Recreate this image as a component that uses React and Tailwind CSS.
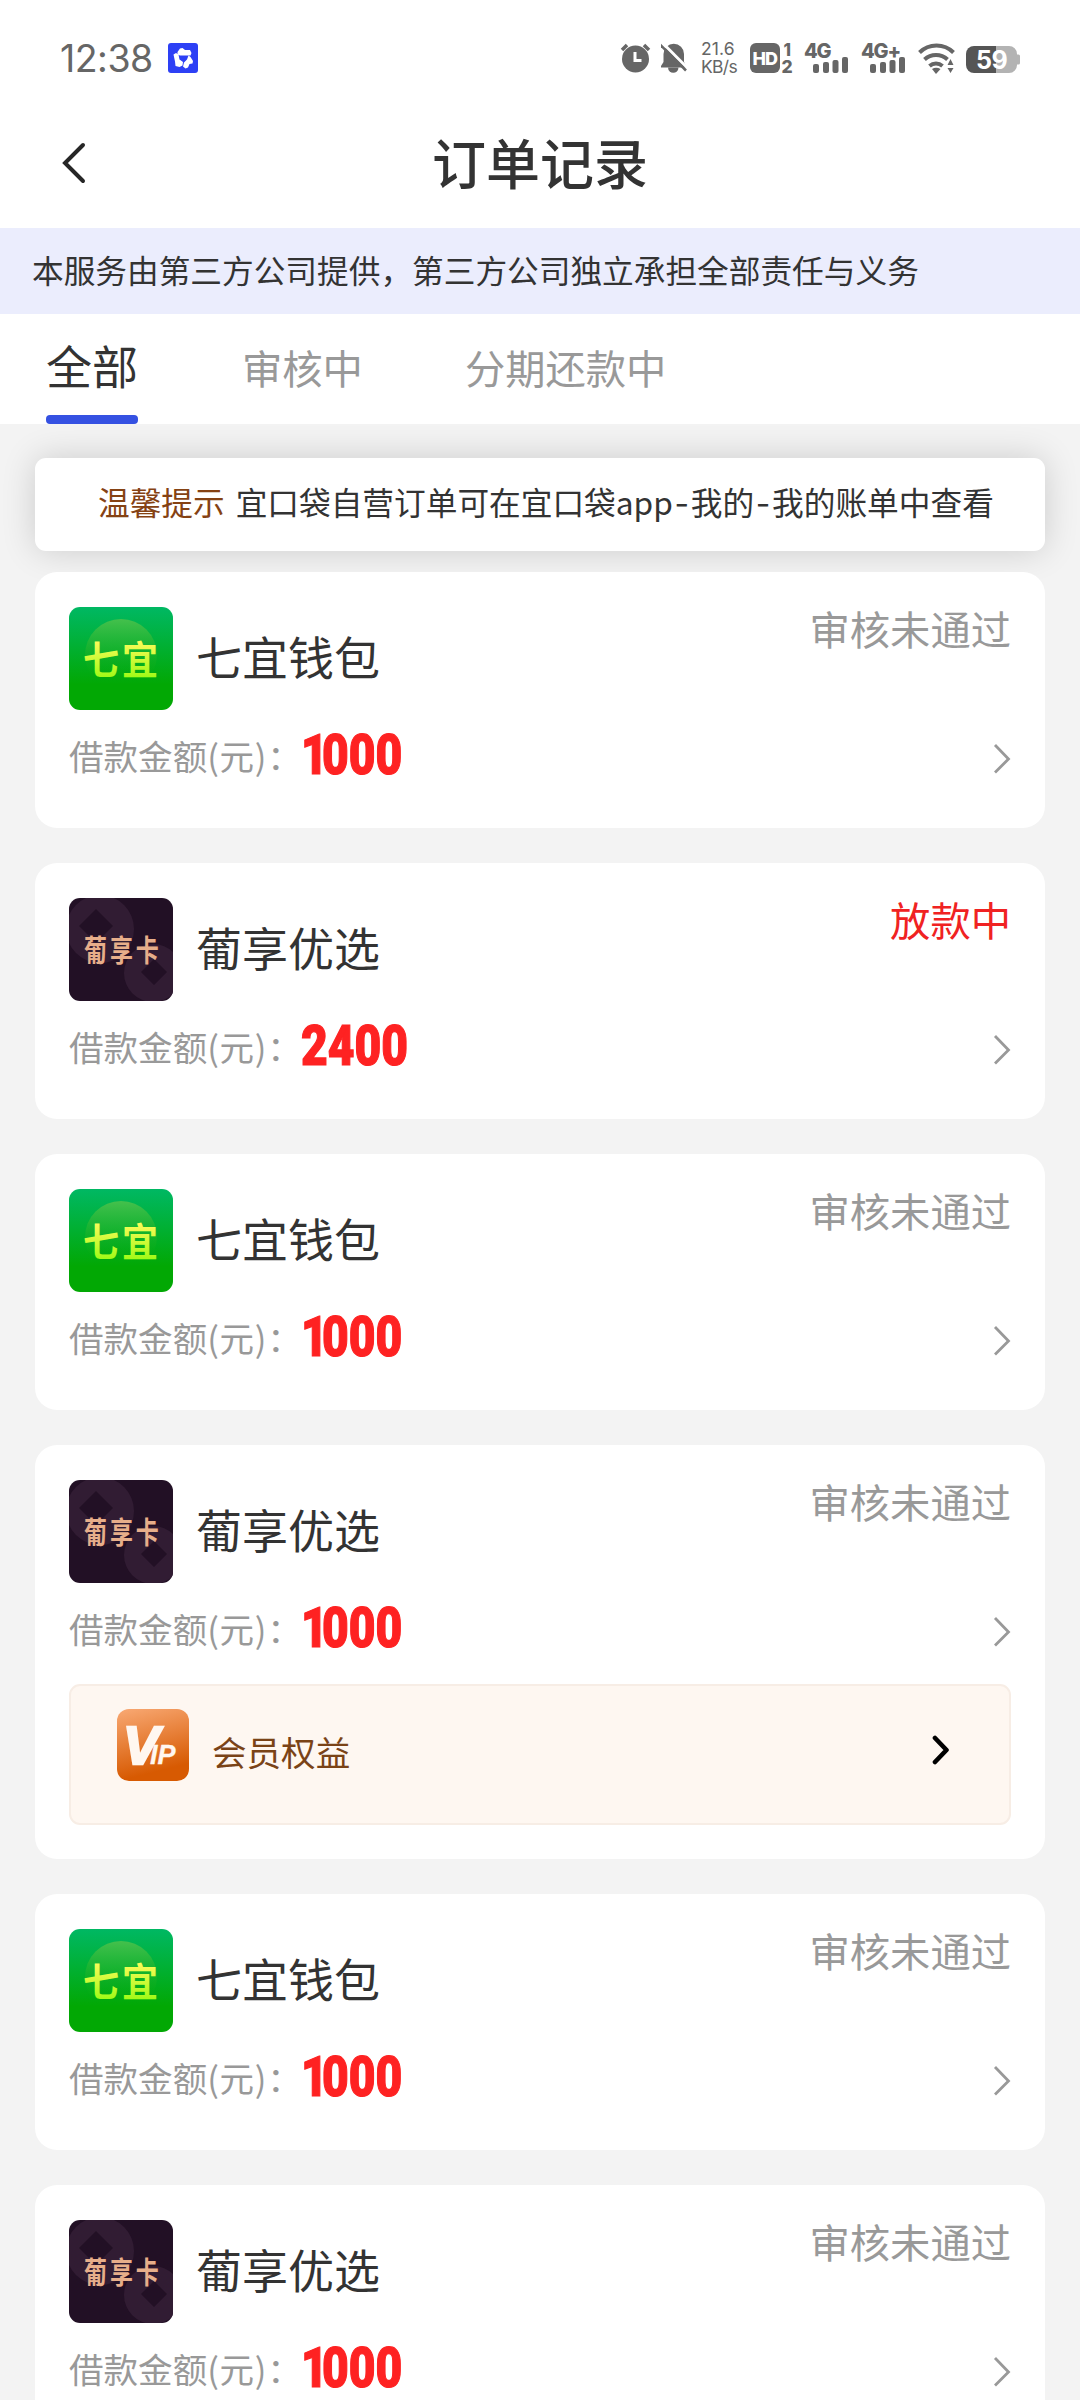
import React from 'react';

const orders = [
    { id: 1, brand: 'qiyi', name: '七宜钱包', amount: 1000, status: 'rejected' },
    { id: 2, brand: 'puxiang', name: '葡享优选', amount: 2400, status: 'lending' },
    { id: 3, brand: 'qiyi', name: '七宜钱包', amount: 1000, status: 'rejected' },
    { id: 4, brand: 'puxiang', name: '葡享优选', amount: 1000, status: 'rejected', vip: true },
    { id: 5, brand: 'qiyi', name: '七宜钱包', amount: 1000, status: 'rejected' },
    { id: 6, brand: 'puxiang', name: '葡享优选', amount: 1000, status: 'rejected' },
];

const statusMap = {
    rejected: { label: '审核未通过', className: 'text-[#999]' },
    lending: { label: '放款中', className: 'text-[#f02222]' },
};

const Signal = ({ label }) => (
    <svg className="overflow-visible" width="46" height="32" viewBox="0 0 46 32" fill="#666">
        <text x="0" y="15.500" fontSize="20" fontWeight="800" fontFamily="Inter, sans-serif" letterSpacing="-1.200">{label}</text>
        <rect x="9" y="22" width="6" height="9" rx="2" />
        <rect x="19" y="20" width="6" height="11" rx="2" />
        <rect x="28.5" y="18" width="6" height="13" rx="2" />
        <rect x="38" y="15" width="6" height="16" rx="2" />
    </svg>
);

const StatusBar = () => (
    <div className="flex h-[116px] items-center pl-[60px] pr-[60px] text-[#666]">
        <span className="w-[108px] pt-[1px] font-[Inter] text-[37.5px] leading-none tracking-[-0.5px]">12:38</span>
        <svg width="30" height="30" viewBox="0 0 30 30">
            <rect width="30" height="30" rx="3" fill="#2d40f5" />
            <g fill="#fff">
                <path d="M9.500 9l2.500-3.500 2.500-.5 2.500 2h5l1.500 3-1 2.500H12l-2.500-1z" />
                <path d="M5.500 11.500L8 10l2.500 1.500 1 5 3.500 2.500-.5 3.500-3 1.500-4-1-.5-4.500z" />
                <path d="M20.500 12.500l2 1.500 2.500 4-.5 2.500-3 .5-1.500 3.500-2.500 1-2.500-2 1-4 3-3z" />
            </g>
        </svg>
        <div className="ml-auto flex items-center">
            {/* Alarm */}
            <svg width="41" height="32" viewBox="0 0 41 32">
                <circle cx="15.500" cy="17" r="13.500" fill="#666" />
                <path d="M2 8l5-5M29 8l-5-5" stroke="#666" strokeWidth="3.500" />
                <path d="M15 10v8.500H21.500" stroke="#fff" strokeWidth="3" fill="none" />
            </svg>
            {/* Muted bell */}
            <svg width="40" height="32" viewBox="0 0 40 32">
                <path d="M2.500 12a10 10 0 0 1 20.500 0v8l3 5.500H-1l3.500-5.500z" fill="#666" />
                <path d="M7 25.500h10.500a5.250 5.250 0 0 1-10.500 0z" fill="#666" />
                <path d="M1 .5l26 26" stroke="#fff" strokeWidth="3" />
                <path d="M-1 2.500l26 26" stroke="#666" strokeWidth="2.600" />
            </svg>
            <div className="w-[49px] font-[Inter] text-[17.5px] leading-[18px] tracking-[-0.7px]">
                <div className="tracking-[0.1px]">21.6</div>
                <div>KB/s</div>
            </div>
            {/* HD 1/2 */}
            <svg className="overflow-visible" width="54" height="32" viewBox="0 0 54 32" fill="#666" fontFamily="Inter, sans-serif">
                <rect y="1" width="30" height="30" rx="6" />
                <text x="2.500" y="22.500" fontSize="18" fontWeight="800" fill="#fff" letterSpacing="-1">HD</text>
                <text x="33.500" y="13.500" fontSize="17" fontWeight="800">1</text>
                <text x="31.500" y="31" fontSize="17.500" fontWeight="800">2</text>
            </svg>
            <div className="mr-[11px] flex"><Signal label="4G" /></div>
            <div className="mr-[11px] flex"><Signal label="4G+" /></div>
            {/* Wifi */}
            <svg width="48" height="32" viewBox="0 0 48 32">
                <g fill="none" stroke="#666" strokeWidth="4">
                    <path d="M1.500 10.500a24 24 0 0 1 34 0" />
                    <path d="M6.500 17.500a17 17 0 0 1 23 0" />
                    <path d="M11.500 24a10 10 0 0 1 13 0" />
                </g>
                <path d="M14 27q4-2.500 8.500 0L18 32z" fill="#666" />
                <path d="M29.500 23l3-6 3 6zM29.500 26l3 5 3-5z" fill="#666" />
            </svg>
            {/* Battery */}
            <svg width="54" height="32" viewBox="0 0 54 32">
                <path d="M8 4h35a8 8 0 0 1 8 8v.5h1.500a1.500 1.500 0 0 1 1.500 1.500v7a1.500 1.500 0 0 1-1.500 1.500H51a8 8 0 0 1-8 8.500H8z" fill="#b3b3b3" />
                <path d="M8 4h22v27H8a8 8 0 0 1-8-8V12a8 8 0 0 1 8-8z" fill="#555" />
                <text x="10" y="26.500" fontSize="25" fontWeight="700" fill="#fff" fontFamily="Inter, sans-serif" letterSpacing="-0.5">59</text>
            </svg>
        </div>
    </div>
);

const Header = () => (
    <div className="relative flex h-[96px] justify-center pt-[19px]">
        <svg className="absolute left-[60px] top-0" width="28" height="96" viewBox="0 0 28 96">
            <path d="M23 29L5 47l18 18" fill="none" stroke="#262626" strokeWidth="4" strokeLinecap="round" />
        </svg>
        <h1 className="text-[54px] font-medium leading-[54px]">订单记录</h1>
    </div>
);

const Tabs = () => (
    <div className="flex h-[110px] shrink-0 bg-white pl-[46px]">
        <div className="flex flex-col justify-between pt-[27px]">
            <span className="text-[46px] leading-[46px]">全部</span>
            <span className="h-[9px] w-[92px] rounded-[4px] bg-[#3551e2]" />
        </div>
        <span className="ml-[104px] pt-[33px] text-[40.300px] leading-[40px] text-[#999]">审核中</span>
        <span className="ml-[102px] pt-[33px] text-[40.300px] leading-[40px] text-[#999]">分期还款中</span>
    </div>
);

const BrandLogo = ({ brand }) => {
    if (brand === 'qiyi') {
        return (
            <svg className="shrink-0 rounded-[11px]" width="104" height="103" viewBox="0 0 104 103">
                <defs>
                    <linearGradient id="qiyiBg" x1="0" y1="0" x2="0" y2="1">
                        <stop offset="0" stopColor="#00b863" />
                        <stop offset="0.75" stopColor="#02a804" />
                        <stop offset="1" stopColor="#02a804" />
                    </linearGradient>
                    <linearGradient id="qiyiDisc" x1="0" y1="0" x2="0" y2="1">
                        <stop offset="0" stopColor="#45c04c" />
                        <stop offset="0.8" stopColor="#14ac10" stopOpacity="0" />
                    </linearGradient>
                    <linearGradient id="qiyiText" x1="0" y1="0" x2="0" y2="1">
                        <stop offset="0.2" stopColor="#fdfb5a" />
                        <stop offset="1" stopColor="#8cfa08" />
                    </linearGradient>
                </defs>
                <rect width="104" height="103" fill="url(#qiyiBg)" />
                <circle cx="52" cy="48" r="36" fill="url(#qiyiDisc)" />
                <text transform="translate(14 67) scale(1 1.06)" fontSize="36" fontWeight="700" letterSpacing="3" fontFamily="'Noto Sans CJK SC', sans-serif" fill="url(#qiyiText)">七宜</text>
            </svg>
        );
    }
    return (
        <svg className="shrink-0 rounded-[11px]" width="104" height="103" viewBox="0 0 104 103">
            <rect width="104" height="103" fill="#221025" />
            <circle cx="31" cy="31" r="34" fill="#311c33" />
            <circle cx="84" cy="75" r="29" fill="#311c33" />
            <path d="M27 11l17 17-17 17-17-17zM85 61l13 13-13 13-13-13z" fill="#221025" />
            <text transform="translate(15 63) scale(0.92 1.18)" fontSize="25" fontWeight="700" letterSpacing="3.200" fontFamily="'Noto Sans CJK SC', sans-serif" fill="#e7ae8a">葡享卡</text>
        </svg>
    );
};

const VipBanner = () => (
    <div className="flex h-[141px] rounded-[11px] border-2 border-[#f7ede5] bg-[#fef7f1] pl-[46px] pr-[59px]">
        <svg className="mt-[23px]" width="72" height="72" viewBox="0 0 72 72">
            <defs>
                <linearGradient id="vipBg" x1="0.2" y1="0" x2="0.45" y2="1">
                    <stop offset="0" stopColor="#f7a56e" />
                    <stop offset="0.9" stopColor="#d75a02" />
                </linearGradient>
            </defs>
            <rect width="72" height="72" rx="12" fill="url(#vipBg)" />
            <text x="6" y="55" fill="#fff7f0" stroke="#fff7f0" fontFamily="'Liberation Sans', sans-serif" fontStyle="italic" fontWeight="700">
                <tspan fontSize="54" strokeWidth="2.500" letterSpacing="-9">V</tspan>
                <tspan fontSize="27" strokeWidth="0.300">IP</tspan>
            </text>
        </svg>
        <span className="ml-[23px] mt-[48px] text-[34.560px] leading-[35px] text-[#7a4317]">会员权益</span>
        <svg className="ml-auto mt-[49px]" width="18" height="30" viewBox="0 0 18 30">
            <path d="M3 3l11.500 12L3 27" fill="none" stroke="#000" strokeWidth="4.600" strokeLinecap="round" strokeLinejoin="round" />
        </svg>
    </div>
);

// The amount face has a narrow "1", so it is kerned separately
const Amount = ({ value }) => (
    <span className="mt-[17px] flex origin-left scale-x-[0.84] font-[Roboto] text-[55px] font-black leading-[56px] text-[#fe2222] [-webkit-text-stroke:1.2px_#fe2222]">
        {String(value).split('').map((digit, i) => (
            <span key={i} className={digit === '1' ? 'tracking-[-7px]' : ''}>{digit}</span>
        ))}
    </span>
);

const OrderCard = ({ order }) => {
    const status = statusMap[order.status];
    return (
        <div className="shrink-0 rounded-[22px] bg-white px-[34px] pb-[34px] pt-[35px]">
            <div className="flex h-[103px]">
                <BrandLogo brand={order.brand} />
                <span className="ml-[23px] mt-[25px] text-[46px] leading-[46px]">{order.name}</span>
                <span className={`ml-auto mt-[1px] text-[40.300px] leading-[40px] ${status.className}`}>{status.label}</span>
            </div>
            <div className="flex h-[84px] items-start">
                <span className="mt-[28px] w-[232px] whitespace-nowrap text-[34.560px] leading-[35px] text-[#999]">
                    借款金额<span className="tracking-[0.7px]">(元)</span>：
                </span>
                <Amount value={order.amount} />
                <svg className="ml-auto mt-[33px]" width="20" height="31" viewBox="0 0 20 31">
                    <path d="M4 2l13.500 14L4 29.500" fill="none" stroke="#999" strokeWidth="2.800" />
                </svg>
            </div>
            {order.vip && (
                <div className="mt-[17px]">
                    <VipBanner />
                </div>
            )}
        </div>
    );
};

const Dash = () => <span className="px-[1.700px] font-[Inter]">-</span>;

const App = () => (
    <div className="flex h-[2400px] w-[1080px] flex-col overflow-hidden bg-[#f3f3f3] font-['Noto_Sans_CJK_SC',sans-serif] text-[#333]">
        <div className="shrink-0 bg-white pb-[16px]">
            <StatusBar />
            <Header />
        </div>
        <div className="h-[86px] shrink-0 bg-[#ebedfd] pl-[32px] pt-[25px] text-[31.680px] leading-[32px]">
            本服务由第三方公司提供，第三方公司独立承担全部责任与义务
        </div>
        <Tabs />
        <div className="flex flex-col px-[35px] pt-[34px]">
            <div className="flex h-[93px] shrink-0 rounded-[11px] bg-white pl-[63px] pt-[27px] text-[31.680px] leading-[32px] shadow-[0_0_34px_rgba(0,0,0,0.16)]">
                <span className="text-[#854213]">温馨提示</span>
                <span className="ml-[11px] whitespace-nowrap">宜口袋自营订单可在宜口袋app<Dash />我的<Dash />我的账单中查看</span>
            </div>
            {/* Order list */}
            <div className="mt-[21px] flex flex-col gap-[35px]">
                {orders.map(order => (
                    <OrderCard key={order.id} order={order} />
                ))}
            </div>
        </div>
    </div>
);

export default App;
